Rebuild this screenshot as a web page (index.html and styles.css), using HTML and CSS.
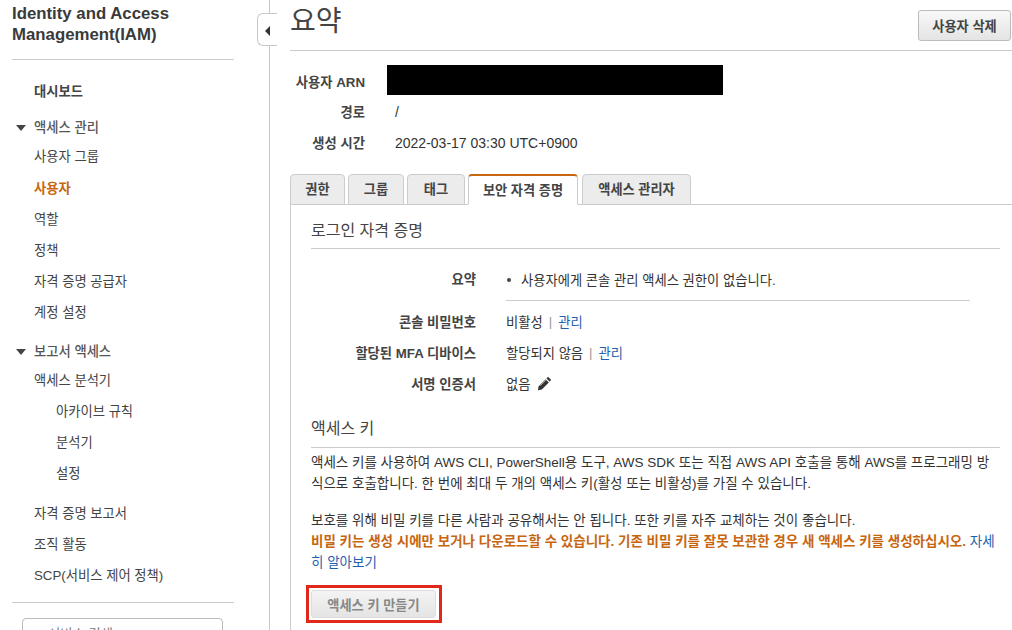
FILE: index.html
```html
<!DOCTYPE html>
<html lang="ko">
<head>
<meta charset="utf-8">
<title>요약</title>
<link rel="stylesheet" href="styles.css">
</head>
<body>
<div class="page">
  <aside class="side">
    <h2 class="side-title">Identity and Access Management(IAM)</h2>
    <hr class="side-rule">
    <nav class="nav">
      <a class="item dash">대시보드</a>
      <a class="item group g1"><span class="caret"></span>액세스 관리</a>
      <a class="item i1">사용자 그룹</a>
      <a class="item active">사용자</a>
      <a class="item">역할</a>
      <a class="item">정책</a>
      <a class="item">자격 증명 공급자</a>
      <a class="item">계정 설정</a>
      <a class="item group g2"><span class="caret"></span>보고서 액세스</a>
      <a class="item">액세스 분석기</a>
      <a class="item sub">아카이브 규칙</a>
      <a class="item sub">분석기</a>
      <a class="item sub">설정</a>
      <a class="item gap">자격 증명 보고서</a>
      <a class="item">조직 활동</a>
      <a class="item">SCP(서비스 제어 정책)</a>
    </nav>
    <hr class="side-rule low">
    <div class="search">Q 서비스 검색</div>
  </aside>
  <div class="toggle"><span class="toggle-arrow"></span></div>
  <main class="main">
    <header class="head">
      <h1 class="title">요약</h1>
      <div class="actions">
        <button class="btn del">사용자 삭제</button>
        <button class="btn help"><svg width="14" height="14" viewBox="0 0 14 14"><circle cx="7" cy="7" r="6.5" fill="#333"/><path d="M4.8 5.4C4.9 4.1 5.9 3.5 7.1 3.5c1.3 0 2.2.8 2.2 1.9 0 1-.6 1.4-1.2 1.8-.4.3-.6.5-.6 1v.3" fill="none" stroke="#fff" stroke-width="1.5"/><rect x="6.3" y="9.4" width="1.6" height="1.6" fill="#fff"/></svg></button>
      </div>
    </header>
    <dl class="meta">
      <dt>사용자 ARN</dt><dd><span class="redact"></span></dd>
      <dt>경로</dt><dd class="latin">/</dd>
      <dt>생성 시간</dt><dd class="latin">2022-03-17 03:30 UTC+0900</dd>
    </dl>
    <div class="tabs">
      <a class="tab t1">권한</a>
      <a class="tab t2">그룹</a>
      <a class="tab t3">태그</a>
      <a class="tab on">보안 자격 증명</a>
      <a class="tab t5">액세스 관리자</a>
    </div>
    <section class="panel">
      <h3 class="sec first">로그인 자격 증명</h3>
      <dl class="cred">
        <dt>요약</dt>
        <dd class="sum"><span class="dot"></span>사용자에게 콘솔 관리 액세스 권한이 없습니다.</dd>
        <dt>콘솔 비밀번호</dt>
        <dd>비활성<span class="sep">|</span><a class="link">관리</a></dd>
        <dt>할당된 MFA 디바이스</dt>
        <dd>할당되지 않음<span class="sep">|</span><a class="link">관리</a></dd>
        <dt>서명 인증서</dt>
        <dd class="cert">없음<svg class="pen" width="15" height="15" viewBox="0 0 15 15"><path d="M11 .8l3.2 3.2-1.6 1.6-3.2-3.2zM8.6 3.2l3.2 3.2-7 7-3.9.8.7-4z" fill="#333"/><path d="M3 9.8l7-7" stroke="#fff" stroke-width=".7"/></svg></dd>
      </dl>
      <h3 class="sec key">액세스 키</h3>
      <p class="para">액세스 키를 사용하여 AWS CLI, PowerShell용 도구, AWS SDK 또는 직접 AWS API 호출을 통해 AWS를 프로그래밍 방식으로 호출합니다. 한 번에 최대 두 개의 액세스 키(활성 또는 비활성)를 가질 수 있습니다.</p>
      <p class="para warn-block">보호를 위해 비밀 키를 다른 사람과 공유해서는 안 됩니다. 또한 키를 자주 교체하는 것이 좋습니다.<br><strong class="warn">비밀 키는 생성 시에만 보거나 다운로드할 수 있습니다. 기존 비밀 키를 잘못 보관한 경우 새 액세스 키를 생성하십시오.</strong> <a class="link">자세히 알아보기</a></p>
      <div class="mark"><button class="btn create" disabled>액세스 키 만들기</button></div>
    </section>
  </main>
</div>
</body>
</html>
```
FILE: styles.css
```css
* { box-sizing: border-box; }
html, body { margin: 0; height: 100%; overflow: hidden; background: #fff; }
body {
  font-family: "Liberation Sans", "Noto Sans CJK KR", sans-serif;
  font-size: 13.3px;
  color: #333;
}
.page { display: flex; width: 1012px; height: 630px; overflow: hidden; }

.side {
  flex: 0 0 270px;
  height: 630px;
  border-right: 1px solid #c8c8c8;
  padding: 3px 35px 0 12px;
  overflow: hidden;
}
.side-title { margin: 0; font-size: 16.8px; line-height: 21px; font-weight: 700; color: #3a3a3a; }
.side-rule { margin: 14px 0 0; border: 0; border-top: 1px solid #ccc; }
.side-rule.low { margin-top: 11px; }
.nav { display: flex; flex-direction: column; padding-top: 16px; }
.item { display: block; height: 31px; line-height: 31px; padding-left: 22px; color: #444; white-space: nowrap; }
.item.dash { font-weight: 700; }
.item.group { font-weight: 500; height: 28px; line-height: 29px; position: relative; color: #555; }
.item.g1 { margin-top: 6px; }
.item.g2 { margin-top: 9px; }
.item.i1 { height: 32px; }
.item.active { color: #c7660f; font-weight: 700; }
.item.sub { padding-left: 44px; }
.item.gap { margin-top: 9px; }
.caret {
  position: absolute; left: 4px; top: 12px; width: 0; height: 0;
  border-left: 5px solid transparent; border-right: 5px solid transparent; border-top: 6px solid #444;
}
.search {
  margin: 15px 11px 0 10px; height: 30px; border: 1px solid #bbb; border-radius: 4px;
  padding: 5px 0 0 11px; color: #777;
}

.toggle {
  flex: 0 0 20px; height: 33px; margin: 13px 0 0 -13px; position: relative;
  border: 1px solid #c8c8c8; border-right: 0; border-radius: 6px 0 0 6px; background: #fff;
}
.toggle-arrow {
  position: absolute; left: 7px; top: 12px; width: 0; height: 0;
  border-top: 5px solid transparent; border-bottom: 5px solid transparent; border-right: 5px solid #333;
}

.main { flex: 0 0 722px; margin-left: 13px; }
.head { display: flex; justify-content: space-between; height: 51px; border-bottom: 1px solid #ccc; }
.title { margin: 0; font-size: 28px; line-height: 44px; font-weight: 400; color: #444; }
.actions { display: flex; gap: 9px; padding-top: 10px; margin-right: -30px; }
.btn {
  font: inherit; font-weight: 700; font-size: 13.2px; color: #444; height: 31px; padding: 0;
  border: 1px solid #bbb; border-radius: 3px; background: linear-gradient(#f8f8f8, #e4e4e4);
}
.btn.del { width: 93px; }
.btn.help { width: 60px; text-align: left; padding-left: 11px; }
.help svg { display: block; }

.meta {
  margin: 0; padding-top: 15px;
  display: grid; grid-template-columns: 75px 1fr; column-gap: 30px; grid-template-rows: 30px 31px 31px;
  align-items: center;
}
.meta dt { font-weight: 700; text-align: right; color: #444; white-space: nowrap; }
.meta dd { margin: 0; }
.latin { font-size: 14px; }
.redact { display: block; width: 336px; height: 30px; background: #000; margin: -3px 0 0 -8px; }

.tabs { display: flex; height: 31px; margin-top: 16px; gap: 3px; position: relative; }
.tab {
  display: block; height: 31px; line-height: 30px; text-align: center; font-weight: 700; font-size: 13.2px; color: #444;
  background: #ececec; border: 1px solid #ccc; border-radius: 4px 4px 0 0;
}
.t1 { width: 55px; } .t2 { width: 56px; } .t3 { width: 58px; } .t5 { width: 109px; margin-left: 1px; }
.tab.on { width: 110px; background: #fff; border-top: 2px solid #c7660f; border-bottom-color: #fff; z-index: 1; }
.panel {
  margin-top: -1px; border-top: 1px solid #ccc; border-left: 1px solid #ccc; padding: 0 0 0 20px; width: 760px; height: 430px;
}
.sec { margin: 0; width: 689px; font-size: 16px; font-weight: 400; color: #444; border-bottom: 1px solid #ccc; }
.sec.first { height: 44px; line-height: 52px; }
.sec.key { height: 32px; line-height: 26px; margin-top: 17px; }
.cred {
  margin: 15px 0 0; display: grid; grid-template-columns: 165px 1fr; column-gap: 30px;
  grid-template-rows: 42px 31px 31px 31px; align-items: center; width: 689px;
}
.cred dt { font-weight: 700; text-align: right; color: #444; white-space: nowrap; }
.cred dd { margin: 0; display: flex; align-items: center; }
.cred dt:first-child { align-self: start; line-height: 31px; }
.cred dd.sum { align-self: start; position: relative; height: 31px; padding-left: 15px; }
.cred dd.sum::after { content: ""; position: absolute; left: 0; right: 30px; bottom: -6px; border-bottom: 1px solid #ccc; }
.dot { position: absolute; left: 1px; top: 14px; width: 4px; height: 4px; border-radius: 50%; background: #444; }
.sep { color: #999; margin: 0 6px; }
.link { color: #1e5fb0; }
.pen { margin-left: 7px; }
.para { margin: 0; width: 689px; line-height: 21px; padding-top: 4px; word-break: break-all; font-size: 13.5px; }
.para.warn-block { padding-top: 16px; }
.warn { color: #c7660f; font-weight: 700; }
.mark { display: inline-block; margin: 12px 0 0 -5px; border: 3px solid #e0281c; padding: 2px 3px 2px 2px; }
.btn.create { display: block; width: 125px; height: 28px; color: #888; border-color: #ddd; background: linear-gradient(#f4f4f4,#e4e4e4); }
```
